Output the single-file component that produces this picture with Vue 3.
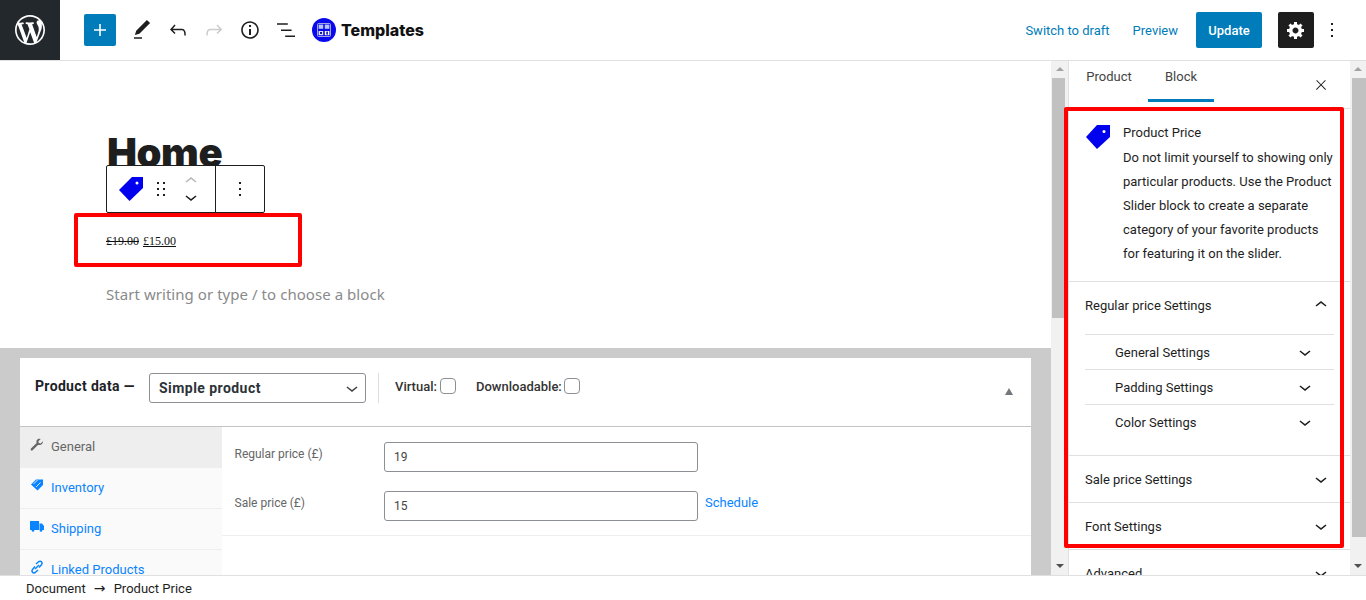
<script setup>
const tabs = [
  { name: 'General', icon: 'wrench', active: true },
  { name: 'Inventory', icon: 'tag' },
  { name: 'Shipping', icon: 'truck' },
  { name: 'Linked Products', icon: 'link' },
]
const inner = ['General Settings', 'Padding Settings', 'Color Settings']
const down = 'M17.5 11.6L12 16l-5.5-4.4.9-1.2L12 14l4.5-3.6 1 1.2z'
const up = 'M6.5 12.4L12 8l5.5 4.4-.9 1.2L12 10l-4.5 3.6-1-1.2z'
</script>

<template>
  <div class="app">
    <header class="topbar">
      <div class="wp">
        <svg width="36" height="36" viewBox="-2 -2 24 24" fill="#fff"><path d="M20 10c0-5.51-4.49-10-10-10C4.48 0 0 4.49 0 10c0 5.52 4.48 10 10 10 5.51 0 10-4.48 10-10zM7.78 15.37L4.37 6.22c.55-.02 1.17-.08 1.17-.08.5-.06.44-1.13-.06-1.11 0 0-1.45.11-2.37.11-.18 0-.37 0-.58-.01C4.12 2.69 6.87 1.11 10 1.11c2.33 0 4.45.87 6.05 2.34-.68-.11-1.65.39-1.65 1.58 0 .74.45 1.36.9 2.1.35.61.55 1.36.55 2.46 0 1.49-1.4 5-1.4 5l-3.03-8.37c.54-.02.82-.17.82-.17.5-.05.44-1.25-.06-1.22 0 0-1.44.12-2.38.12-.87 0-2.33-.12-2.33-.12-.5-.03-.56 1.2-.06 1.22l.92.08 1.26 3.41zM17.41 10c.24-.64.74-1.87.43-4.25.7 1.29 1.05 2.71 1.05 4.25 0 3.29-1.73 6.24-4.4 7.78.97-2.59 1.94-5.2 2.92-7.78zM6.1 18.09C3.12 16.65 1.11 13.53 1.11 10c0-1.3.23-2.48.72-3.59C3.25 10.3 4.67 14.2 6.1 18.09zm4.03-6.63l2.58 6.98c-.86.29-1.76.45-2.71.45-.79 0-1.57-.11-2.29-.33.81-2.38 1.62-4.74 2.42-7.1z"/></svg>
      </div>
      <div class="tools">
        <button class="plus"><svg width="24" height="24" viewBox="0 0 24 24" fill="#fff"><path d="M18 11.2h-5.2V6h-1.6v5.2H6v1.6h5.2V18h1.6v-5.2H18z"/></svg></button>
        <span class="ti"><svg width="24" height="24" viewBox="0 0 24 24" fill="#1e1e1e"><path d="M20.1 5.1L16.9 2 6.2 12.7l-1.3 4.4 4.5-1.3L20.1 5.1zM4 20.8h8v-1.5H4v1.5z"/></svg></span>
        <span class="ti"><svg width="24" height="24" viewBox="0 0 24 24" fill="#1e1e1e"><path d="M18.3 11.7c-.6-.6-1.4-.9-2.3-.9H6.7l2.9-3.3-1.1-1-4.5 5L8.5 16l1-1-2.7-2.7H16c.5 0 .9.2 1.3.5 1 1 1 3.4 1 4.5v.3h1.5v-.2c0-1.5 0-4.3-1.5-5.7z"/></svg></span>
        <span class="ti"><svg width="24" height="24" viewBox="0 0 24 24" fill="#ccc"><path d="M15.6 6.5l-1.1 1 2.9 3.3H8c-.9 0-1.7.3-2.3.9-1.4 1.5-1.4 4.2-1.4 5.6v.2h1.5v-.3c0-1.1 0-3.5 1-4.5.3-.3.7-.5 1.3-.5h9.2L14.5 15l1.1 1.1 4.6-4.6-4.6-5z"/></svg></span>
        <span class="ti"><svg width="24" height="24" viewBox="0 0 24 24" fill="#1e1e1e"><path d="M12 3.2c-4.8 0-8.8 3.9-8.8 8.8 0 4.8 3.9 8.8 8.8 8.8 4.8 0 8.8-3.9 8.8-8.8 0-4.8-4-8.8-8.8-8.8zm0 16c-4 0-7.2-3.3-7.2-7.2C4.8 8 8 4.8 12 4.8s7.2 3.3 7.2 7.2c0 4-3.2 7.2-7.2 7.2zM11 17h2v-6h-2v6zm0-8h2V7h-2v2z"/></svg></span>
        <span class="ti"><svg width="24" height="24" viewBox="0 0 24 24" fill="#1e1e1e"><path d="M3 5.2h10.800v1.500H3zM7 11.400h10.600v1.500H7zM11.200 17.400H21v1.500h-9.800z"/></svg></span>
      </div>
      <div class="tpl">
        <svg width="24" height="24" viewBox="0 0 24 24"><circle cx="12" cy="12" r="12" fill="#0a0aee"/><rect x="5.500" y="5.500" width="13" height="13" rx="1" fill="#0a0aee" stroke="#ccd" stroke-width=".8"/><rect x="6.600" y="6.600" width="4.600" height="4.200" fill="#b9c6f5"/><rect x="12.800" y="6.600" width="4.600" height="4.200" fill="#b9c6f5"/><rect x="6.600" y="13" width="4.600" height="4.200" fill="#dfe5fb"/><rect x="8" y="14" width="2" height="2" fill="#111a88"/><rect x="12.800" y="13" width="4.600" height="4.200" fill="#fff"/><rect x="14.300" y="13.600" width="1.600" height="3" fill="#111a88"/></svg>
        <span class="tpl-name">Templates</span>
      </div>
      <div class="right">
        <a class="link sw">Switch to draft</a>
        <a class="link pv">Preview</a>
        <button class="update">Update</button>
        <button class="cog"><svg width="20" height="20" viewBox="0 0 20 20" fill="#fff"><path d="M18 12h-2.18c-.17.7-.44 1.35-.81 1.93l1.54 1.54-2.1 2.1-1.54-1.54c-.58.36-1.23.63-1.91.79V19H8v-2.18c-.68-.16-1.33-.43-1.91-.79l-1.54 1.54-2.12-2.12 1.54-1.54c-.36-.58-.63-1.23-.79-1.91H1V9.03h2.17c.16-.7.44-1.35.8-1.94L2.43 5.55l2.1-2.1 1.54 1.54c.58-.37 1.24-.64 1.93-.81V2h3v2.18c.68.16 1.33.43 1.91.79l1.54-1.54 2.12 2.12-1.54 1.54c.36.59.64 1.24.8 1.94H18V12zm-8.5 1.5c1.66 0 3-1.34 3-3s-1.34-3-3-3-3 1.34-3 3 1.34 3 3 3z"/></svg></button>
        <span class="more"><svg width="24" height="24" viewBox="0 0 24 24" fill="#1e1e1e"><path d="M13 19h-2v-2h2v2zm0-6h-2v-2h2v2zm0-6h-2V5h2v2z"/></svg></span>
      </div>
    </header>

    <div class="main">
      <section class="editor">
        <div class="canvas">
          <h1 class="title">Home</h1>
          <div class="toolbar">
            <div class="tb-left">
              <svg class="tag" width="24" height="24" viewBox="0 0 24 24"><path d="M13 0H24V11L10.500 24 0 13z" fill="#0000ee"/><circle cx="18" cy="6" r="1.500" fill="#fff"/></svg>
              <svg class="drag" width="10" height="16" viewBox="0 0 10 16" fill="#1e1e1e"><rect x="1" y="1" width="2" height="2"/><rect x="7" y="1" width="2" height="2"/><rect x="1" y="7" width="2" height="2"/><rect x="7" y="7" width="2" height="2"/><rect x="1" y="13" width="2" height="2"/><rect x="7" y="13" width="2" height="2"/></svg>
              <div class="movers">
                <svg width="24" height="16" viewBox="0 4 24 16" fill="#b8b8b8"><path :d="up"/></svg>
                <svg width="24" height="16" viewBox="0 4 24 16" fill="#1e1e1e"><path :d="down"/></svg>
              </div>
            </div>
            <div class="tb-right"><svg width="24" height="24" viewBox="0 0 24 24" fill="#1e1e1e"><path d="M13 19h-2v-2h2v2zm0-6h-2v-2h2v2zm0-6h-2V5h2v2z"/></svg></div>
          </div>
          <p class="price"><del>£19.00</del> <ins>£15.00</ins></p>
          <div class="redbox price-box"></div>
          <p class="placeholder">Start writing or type / to choose a block</p>
        </div>

        <div class="meta-wrap">
          <div class="metabox">
            <div class="mb-head">
              <strong class="pd">Product data —</strong>
              <div class="select">Simple product
                <svg width="24" height="24" viewBox="0 0 24 24" fill="#444"><path :d="down"/></svg>
              </div>
              <span class="vsep"></span>
              <label class="chk l1">Virtual: <i class="box"></i></label>
              <label class="chk">Downloadable: <i class="box"></i></label>
              <i class="tri"></i>
            </div>
            <div class="mb-body">
              <nav class="tabs">
                <div v-for="t in tabs" :key="t.name" class="tab" :class="{ on: t.active }">
                  <svg v-if="t.icon === 'wrench'" width="14" height="14" viewBox="0 0 14 14" fill="#666"><path d="M13 3.2 10.6 5.4 8.8 5 8.4 3.3 10.7 1C9 .3 7.3 1 6.6 2.4c-.4.9-.3 1.8 0 2.6L1 10.6c-.5.5-.5 1.2 0 1.7s1.2.4 1.6 0L8.200 6.800c.9.400 2 .300 3-.3 1.200-.8 1.900-2 1.800-3.300z"/></svg>
                  <svg v-else-if="t.icon === 'tag'" width="14" height="14" viewBox="0 0 14 14" fill="#0a84ff"><path d="M1 6.500 6 1.500 13 1.500 13 7 7.500 12.500z"/><path d="M3.500 6 7.500 2" stroke="#fff" stroke-width=".8"/><path d="M6 9 10.500 4.500" stroke="#fff" stroke-width=".8"/></svg>
                  <svg v-else-if="t.icon === 'truck'" width="14" height="14" viewBox="0 0 14 14" fill="#0a84ff"><path d="M0 2H9V11H0zM9.500 4.500H12L14 7V11H9.500z"/><circle cx="3" cy="11.500" r="1.300"/><circle cx="11" cy="11.500" r="1.300"/></svg>
                  <svg v-else width="14" height="14" viewBox="0 0 14 14" fill="none" stroke="#0a84ff" stroke-width="1.500"><path d="M6 4 8.500 1.800c1-.9 2.300-.8 3 0s.8 2 0 2.900L9 7.500"/><path d="M8 10 5.500 12.300c-1 .9-2.300.8-3 0s-.8-2 0-2.900L5 6.500"/><path d="M5 9 9 5"/></svg>
                  <span>{{ t.name }}</span>
                </div>
              </nav>
              <div class="fields">
                <div class="field-group">
                  <div class="field">
                    <label>Regular price (£)</label>
                    <div class="input">19</div>
                  </div>
                  <div class="field">
                    <label>Sale price (£)</label>
                    <div class="input">15</div>
                    <a class="sched">Schedule</a>
                  </div>
                </div>
              </div>
            </div>
          </div>
        </div>
      </section>

      <div class="sb sb-left">
        <i class="arr-up"></i>
        <i class="thumb t1"></i>
        <i class="spacer"></i>
        <i class="arr-down"></i>
      </div>

      <aside class="side">
        <div class="side-tabs">
          <span class="st">Product</span>
          <span class="st active">Block</span>
          <svg class="close" width="16" height="16" viewBox="0 0 24 24" fill="#1e1e1e"><path d="M13 11.800l6.100-6.300-1-1-6.100 6.200-6.100-6.200-1 1 6.100 6.300-6.500 6.700 1 1 6.500-6.600 6.500 6.600 1-1z"/></svg>
        </div>
        <div class="block-card">
          <svg class="card-tag" width="24" height="24" viewBox="0 0 24 24"><path d="M11 0H24V12L11 24 0 12z" fill="#0000ee"/><circle cx="18" cy="6.500" r="1.500" fill="#fff"/></svg>
          <div class="card-text">
            <div class="card-title">Product Price</div>
            <div class="card-desc">Do not limit yourself to showing only particular products. Use the Product Slider block to create a separate category of your favorite products for featuring it on the slider.</div>
          </div>
        </div>
        <div class="panel open">
          <div class="phead"><span>Regular price Settings</span><svg width="24" height="24" viewBox="0 0 24 24" fill="#1e1e1e"><path :d="up"/></svg></div>
          <div class="inner-list">
            <div v-for="i in inner" :key="i" class="inner-row"><span>{{ i }}</span><svg width="24" height="24" viewBox="0 0 24 24" fill="#1e1e1e"><path :d="down"/></svg></div>
          </div>
        </div>
        <div class="panel"><div class="phead"><span>Sale price Settings</span><svg width="24" height="24" viewBox="0 0 24 24" fill="#1e1e1e"><path :d="down"/></svg></div></div>
        <div class="panel"><div class="phead"><span>Font Settings</span><svg width="24" height="24" viewBox="0 0 24 24" fill="#1e1e1e"><path :d="down"/></svg></div></div>
        <div class="panel"><div class="phead"><span>Advanced</span><svg width="24" height="24" viewBox="0 0 24 24" fill="#1e1e1e"><path :d="down"/></svg></div></div>
      </aside>

      <div class="sb sb-right">
        <i class="arr-up"></i>
        <i class="thumb t2"></i>
        <i class="spacer"></i>
        <i class="arr-down"></i>
      </div>
      <div class="redbox side-box"></div>
    </div>

    <footer class="crumbs">
      <span>Document</span><span class="arrow">→</span><span>Product Price</span>
    </footer>
  </div>
</template>

<style scoped>
.app { width: 1366px; height: 600px; overflow: hidden; display: flex; flex-direction: column; background: #fff; font-family: Roboto, "Liberation Sans", sans-serif; color: #1e1e1e; font-size: 13px; position: relative; }
.topbar { height: 61px; flex: none; display: flex; align-items: center; border-bottom: 1px solid #e0e0e0; box-sizing: border-box; }
.wp { width: 60px; height: 60px; background: #23282d; display: flex; align-items: center; justify-content: center; }
.tools { display: flex; align-items: center; margin-left: 24px; gap: 12px; }
.plus { width: 32px; height: 32px; border: 0; padding: 0; border-radius: 2px; background: #007cba; display: flex; align-items: center; justify-content: center; margin-right: 2px; }
.ti { width: 24px; height: 24px; display: block; }
.tpl { display: flex; align-items: center; gap: 5px; margin-left: 14px; }
.tpl-name { font-family: Inter, "Liberation Sans", sans-serif; font-weight: 800; font-size: 16px; color: #111; }
.right { margin-left: auto; display: flex; align-items: center; }
.link { color: #007cba; font-size: 13px; }
.sw { margin-right: 23px; }
.pv { margin-right: 18px; }
.update { width: 66px; height: 36px; border: 0; border-radius: 2px; background: #007cba; color: #fff; font: 500 13px Roboto, sans-serif; padding: 0; margin-right: 16px; }
.cog { width: 36px; height: 36px; border: 0; border-radius: 2px; background: #1e1e1e; display: flex; align-items: center; justify-content: center; padding: 0; margin-right: 6px; }
.more { width: 24px; height: 24px; margin-right: 22px; }

.main { flex: 1; min-height: 0; display: flex; position: relative; overflow: hidden; }
.editor { width: 1051px; flex: none; display: flex; flex-direction: column; overflow: hidden; }
.canvas { height: 287px; flex: none; position: relative; padding-left: 107px; box-sizing: border-box; overflow: hidden; }
.title { margin: 0; padding-top: 70px; font-family: Inter, "Liberation Sans", sans-serif; font-weight: 900; font-size: 40px; line-height: 44px; color: #1e1e1e; letter-spacing: -.45px; }
.toolbar { position: absolute; left: 106px; top: 104px; height: 48px; width: 159px; box-sizing: border-box; border: 1px solid #1e1e1e; border-radius: 2px; background: #fff; display: flex; }
.tb-left { width: 109px; display: flex; align-items: center; border-right: 1px solid #1e1e1e; position: relative; box-sizing: border-box; }
.tag { margin-left: 12px; }
.drag { margin-left: 13px; flex: none; }
.movers { display: flex; flex-direction: column; margin-left: 13px; flex: none; margin-top: -1px; }
.tb-right { flex: 1; display: flex; align-items: center; justify-content: center; }
.price { margin: 0; position: absolute; top: 172px; left: 106px; font-family: "Liberation Serif", serif; font-size: 12px; line-height: 16px; color: #111; word-spacing: 1px; }
.placeholder { margin: 0; position: absolute; top: 222px; left: 106px; font-family: "Noto Sans", sans-serif; font-size: 15px; line-height: 22px; color: #8a8a8a; letter-spacing: .05px; }
.redbox { position: absolute; border: 4px solid #f00; box-sizing: border-box; border-radius: 2px; pointer-events: none; }
.price-box { left: 74px; top: 152px; width: 228px; height: 54px; }
.side-box { left: 1064px; top: 46px; width: 280px; height: 441px; }

.meta-wrap { flex: 1; background: #cbcbcb; padding: 10px 20px 0; min-height: 0; }
.metabox { background: #fff; height: 300px; }
.mb-head { height: 69px; border-bottom: 1px solid #c3c4c7; display: flex; align-items: flex-start; padding: 15px 0 0 15px; box-sizing: border-box; position: relative; color: #1e1e1e; }
.pd { font-size: 14px; line-height: 26px; font-weight: 700; color: #1d2327; white-space: nowrap; width: 107px; letter-spacing: .35px; flex: none; }
.select { width: 217px; height: 30px; margin-left: 7px; box-sizing: border-box; border: 1px solid #8c8f94; border-radius: 3px; display: flex; align-items: center; justify-content: space-between; padding: 0 1px 0 9px; font-weight: 700; font-size: 14px; letter-spacing: .45px; color: #2c3338; }
.vsep { width: 1px; height: 30px; background: #ddd; margin-left: 12px; }
.chk { display: flex; align-items: center; font-size: 13px; font-weight: 500; color: #333; height: 22px; margin-left: 16px; margin-top: 2px; white-space: nowrap; gap: 2px; }
.chk.l1 { width: 61px; margin-right: 4px; gap: 3px; }
.box { width: 16px; height: 16px; box-sizing: border-box; border: 1px solid #8c8f94; border-radius: 4px; display: block; background: #fff; flex: none; }
.tri { position: absolute; right: 18px; top: 30px; width: 0; height: 0; border-left: 4.500px solid transparent; border-right: 4.500px solid transparent; border-bottom: 7px solid #72777c; }
.mb-body { display: flex; }
.tabs { width: 202px; flex: none; background: #fafafa; }
.tab { height: 41px; box-sizing: border-box; display: flex; align-items: center; gap: 7px; padding-left: 10px; padding-bottom: 2px; color: #0a84ff; border-bottom: 1px solid #eee; font-size: 13px; }
.tab.on { background: #eee; color: #666; border-bottom: 0; }
.tab svg { margin-top: -4px; }
.fields { flex: 1; }
.field-group { height: 109px; border-bottom: 1px solid #eee; padding-top: 15px; box-sizing: border-box; }
.field { display: flex; align-items: flex-start; height: 49px; padding-left: 12.500px; }
.field label { width: 149.500px; font-size: 12px; color: #666; line-height: 24px; }
.input { width: 314px; height: 30px; box-sizing: border-box; border: 1px solid #8c8f94; border-radius: 3px; font-size: 12px; color: #444; padding-left: 9px; line-height: 28px; background: #fff; }
.sched { color: #0a84ff; font-size: 13px; margin-left: 7px; line-height: 24px; }

.sb { width: 17px; flex: none; background: #f1f1f1; display: flex; flex-direction: column; align-items: center; box-sizing: border-box; }
.sb-right { width: 16px; }
.thumb { background: #c1c1c1; width: 100%; display: block; }
.sb-left .thumb { width: 13px; margin-right: 3px; }
.sb-right .thumb { width: 14px; margin-left: 1px; }
.t1 { height: 240px; }
.t2 { height: 459px; }
.spacer { flex: 1; }
.arr-up, .arr-down { width: 0; height: 0; display: block; border-left: 4px solid transparent; border-right: 4px solid transparent; margin: 0 auto; }
.arr-up { border-bottom: 4px solid #a3a3a3; margin-top: 6px; margin-bottom: 7px; }
.arr-down { border-top: 4px solid #505050; margin-top: 3px; margin-bottom: 7px; }

.side { width: 282px; flex: none; border-left: 1px solid #e0e0e0; box-sizing: border-box; overflow: hidden; font-size: 13px; }
.side-tabs { height: 48px; border-bottom: 1px solid #e0e0e0; display: flex; position: relative; padding-left: 7px; box-sizing: border-box; }
.st { width: 66px; text-align: center; line-height: 31px; color: #444; box-sizing: border-box; height: 41px; }
.st.active { margin-left: 6px; border-bottom: 3px solid #007cba; height: 41px; }
.close { position: absolute; left: 244px; top: 16px; }
.block-card { height: 173px; border-bottom: 1px solid #e0e0e0; display: flex; padding: 16px 16px 0 17px; box-sizing: border-box; }
.card-tag { flex: none; }
.card-text { margin-left: 13px; line-height: 24px; width: 212px; margin-top: -4px; }
.card-title { line-height: 24px; }
.card-desc { margin-top: 1px; color: #1e1e1e; white-space: normal; }
.panel { border-bottom: 1px solid #e0e0e0; }
.panel.open { height: 174px; box-sizing: border-box; }
.phead { height: 46px; display: flex; align-items: center; justify-content: space-between; padding: 0 16px 0 16px; box-sizing: border-box; }
.panel.open .phead { height: 52px; padding-bottom: 6px; }
.inner-list { margin: 0 16px; }
.inner-row { height: 35px; box-sizing: border-box; border-top: 1px solid #e0e0e0; display: flex; align-items: center; justify-content: space-between; padding: 0 16px 0 30px; }
.phead svg { margin-right: 1px; }
.inner-row svg { margin-right: 1px; }

.crumbs { height: 25px; flex: none; box-sizing: border-box; border-top: 1px solid #e0e0e0; background: #fff; display: flex; align-items: center; padding-left: 26px; font-size: 13px; position: relative; }
.arrow { margin: 0 7px; width: 14px; text-align: center; font-family: "DejaVu Sans", sans-serif; font-size: 14px; line-height: 16px; }
</style>

<style>
html, body { margin: 0; overflow: hidden; }
</style>
